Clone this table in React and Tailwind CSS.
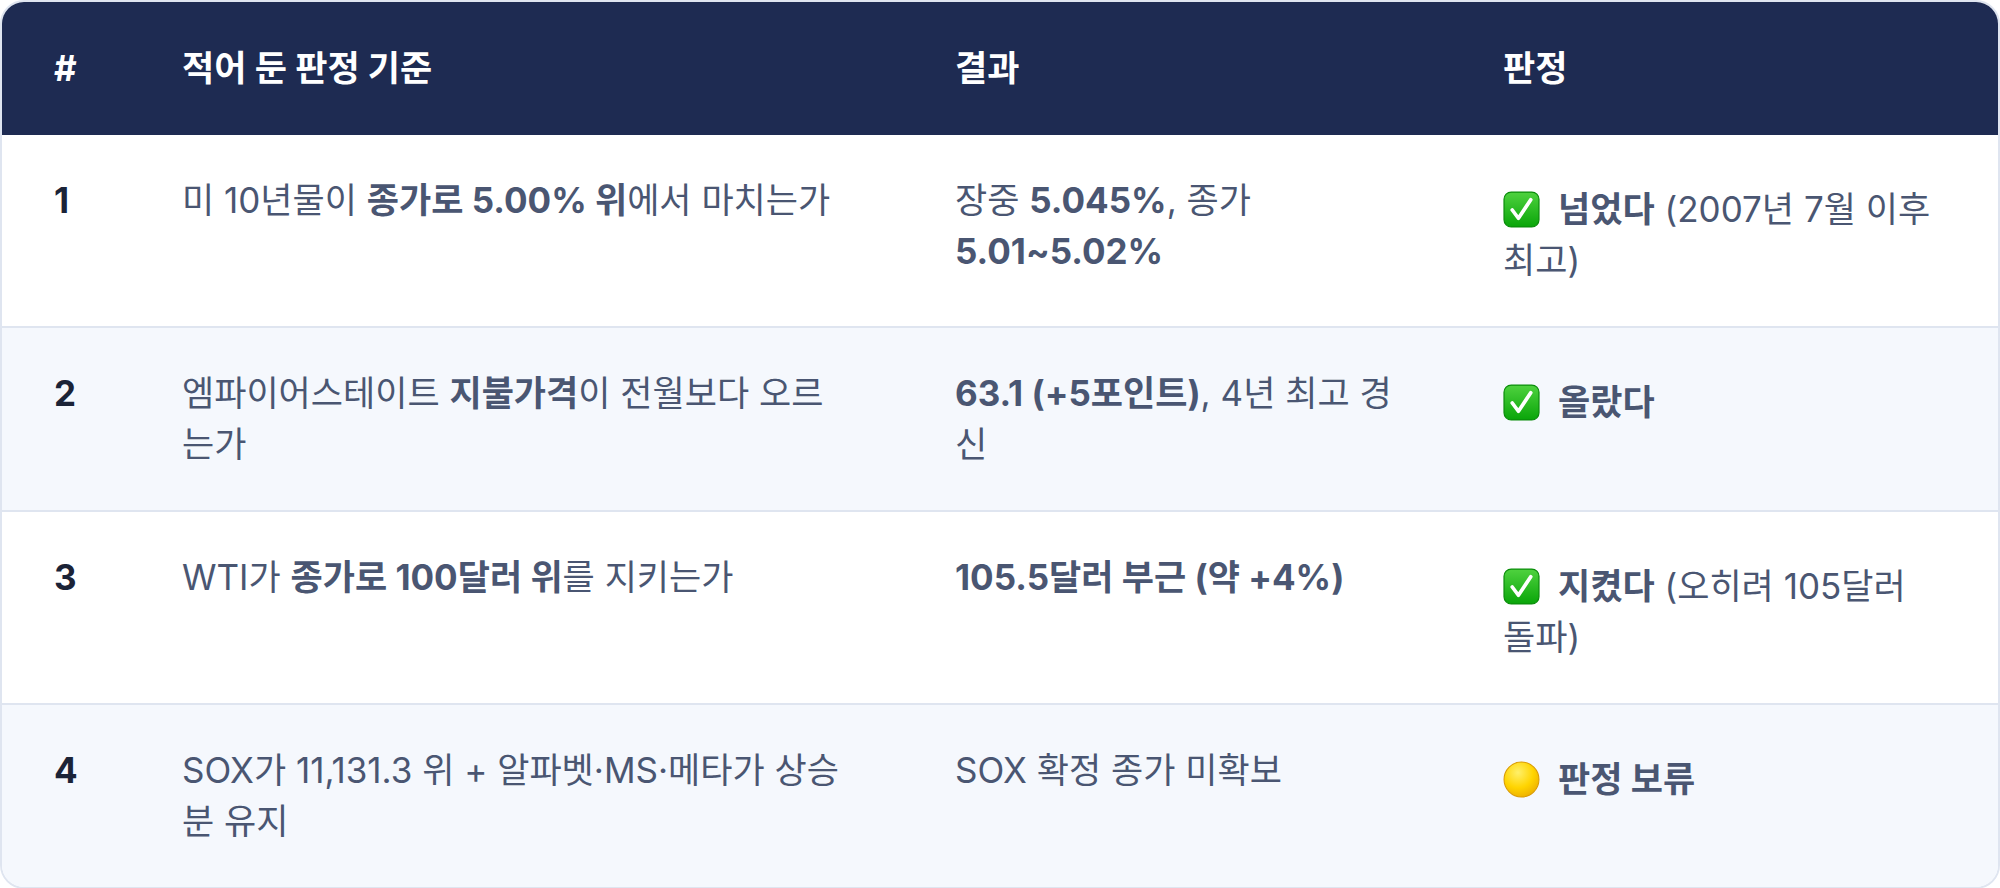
const rows = [
  {
    no: "1",
    criteria: (
      <>
        미 10년물이 <b>종가로 5.00% 위</b>에서 마치는가
      </>
    ),
    result: (
      <>
        장중 <b>5.045%</b>, 종가
        <br />
        <b>5.01~5.02%</b>
      </>
    ),
    mark: "check",
    verdict: "넘었다",
    note: (
      <>
        (2007년 7월 이후
        <br />
        최고)
      </>
    ),
  },
  {
    no: "2",
    criteria: (
      <>
        엠파이어스테이트 <b>지불가격</b>이 전월보다 오르
        <br />
        는가
      </>
    ),
    result: (
      <>
        <b>63.1 (+5포인트)</b>, 4년 최고 경
        <br />신
      </>
    ),
    mark: "check",
    verdict: "올랐다",
  },
  {
    no: "3",
    criteria: (
      <>
        WTI가 <b>종가로 100달러 위</b>를 지키는가
      </>
    ),
    result: <b>105.5달러 부근 (약 +4%)</b>,
    mark: "check",
    verdict: "지켰다",
    note: (
      <>
        (오히려 105달러
        <br />
        돌파)
      </>
    ),
  },
  {
    no: "4",
    criteria: (
      <>
        SOX가 11,131.3 위 + 알파벳·MS·메타가 상승
        <br />분 유지
      </>
    ),
    result: <>SOX 확정 종가 미확보</>,
    mark: "pending",
    verdict: "판정 보류",
  },
];

// green box check, like the ✅ emoji
function CheckMark() {
  return (
    <svg
      viewBox="0 0 36 36"
      className="inline-block w-[37px] h-[37px] align-[-6px] mr-[18px]"
    >
      <defs>
        <linearGradient id="gbox" x1="0" y1="0" x2="0" y2="1">
          <stop offset="0" stopColor="#4fd23f" />
          <stop offset="1" stopColor="#09a509" />
        </linearGradient>
      </defs>
      <rect x="1" y="1" width="34" height="34" rx="7" fill="url(#gbox)" stroke="#0b8d0b" strokeWidth="1.2" />
      <path
        d="M9 18.5 L15 26.5 L27 8.5"
        fill="none"
        stroke="#fff"
        strokeWidth="3.6"
        strokeLinecap="round"
        strokeLinejoin="round"
      />
    </svg>
  );
}

// yellow circle, like the 🟡 emoji
function PendingMark() {
  return (
    <svg
      viewBox="0 0 36 36"
      className="inline-block w-[37px] h-[37px] align-[-6px] mr-[18px]"
    >
      <defs>
        <radialGradient id="ycirc" cx="0.4" cy="0.3" r="0.8">
          <stop offset="0" stopColor="#fff06a" />
          <stop offset="0.55" stopColor="#ffd400" />
          <stop offset="1" stopColor="#e9a800" />
        </radialGradient>
      </defs>
      <circle cx="18" cy="18" r="17" fill="url(#ycirc)" stroke="#d99a00" strokeWidth="1" />
    </svg>
  );
}

export default function App() {
  return (
    <div
      className="w-[2000px] bg-white text-[35px] leading-[51px]"
      style={{ fontFamily: '"Inter", "Noto Sans CJK KR", sans-serif' }}
    >
      <div className="rounded-[24px] border-2 border-[#dfe5f0] overflow-hidden">
        <table className="w-full table-fixed border-collapse">
          <colgroup>
            <col className="w-[128px]" />
            <col className="w-[773px]" />
            <col className="w-[548px]" />
            <col className="w-[547px]" />
          </colgroup>
          <thead>
            <tr className="bg-[#1e2b52] text-white text-left">
              <th className="px-[52px] py-[41px] font-bold">#</th>
              <th className="px-[52px] py-[41px] font-bold">적어 둔 판정 기준</th>
              <th className="px-[52px] py-[41px] font-bold">결과</th>
              <th className="px-[52px] py-[41px] font-bold">판정</th>
            </tr>
          </thead>
          <tbody>
            {rows.map((row, i) => (
              <tr
                key={row.no}
                className={
                  (i % 2 === 1 ? "bg-[#f5f8fd]" : "bg-white") +
                  (i > 0 ? " border-t-2 border-[#dfe5f0]" : "")
                }
              >
                <td className="px-[52px] py-[40px] align-top font-bold text-[#1b2337]">
                  {row.no}
                </td>
                <td className="px-[52px] py-[40px] align-top whitespace-nowrap text-[#4a5672]">
                  {row.criteria}
                </td>
                <td className="px-[52px] py-[40px] align-top whitespace-nowrap text-[#4a5672]">
                  {row.result}
                </td>
                <td className="px-[52px] pt-[49px] pb-[40px] align-top whitespace-nowrap text-[#4a5672]">
                  {row.mark === "check" ? <CheckMark /> : <PendingMark />}
                  <b>{row.verdict}</b>
                  {row.note && <> {row.note}</>}
                </td>
              </tr>
            ))}
          </tbody>
        </table>
      </div>
    </div>
  );
}
